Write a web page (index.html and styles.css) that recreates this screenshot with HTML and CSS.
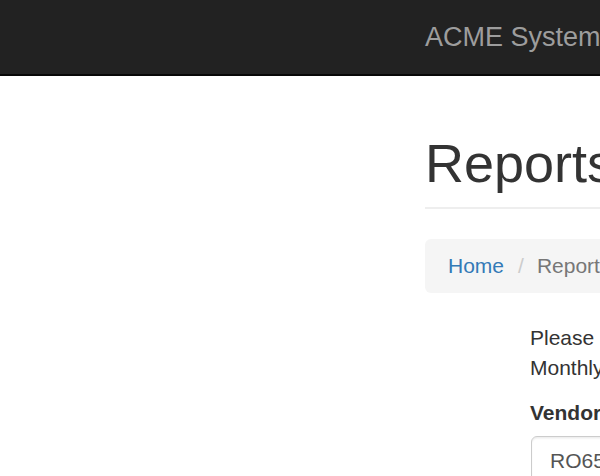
FILE: index.html
```html
<!DOCTYPE html>
<html>
<head>
<meta charset="utf-8">
<link rel="stylesheet" href="styles.css">
</head>
<body>
<nav class="navbar">
  <div class="container">
    <span class="brand">ACME System</span>
  </div>
</nav>
<main class="container">
  <div class="page-header">
    <h1>Reports</h1>
  </div>
  <ol class="breadcrumb">
    <li><a href="#">Home</a></li>
    <li class="sep">/</li>
    <li class="active">Reports</li>
  </ol>
  <div class="form-col">
    <p class="intro">Please select a vendor below to view the<br>Monthly Vendor Report.</p>
    <label class="label">Vendor</label>
    <div class="input">RO6521</div>
  </div>
</main>
</body>
</html>
```
FILE: styles.css
```css
html, body {
  margin: 0;
  padding: 0;
  overflow: hidden;
  background: #fff;
}
body {
  font-family: "Liberation Sans", Arial, sans-serif;
  font-size: 21px;
  line-height: 30px;
  color: #333;
  width: 600px;
  height: 476px;
}
.container {
  margin-left: 425px;
  width: 1200px;
}
.navbar {
  height: 74px;
  background: #222;
  border-bottom: 2px solid #080808;
}
.brand {
  display: block;
  padding-top: 22px;
  font-size: 27px;
  line-height: 30px;
  color: #9d9d9d;
  white-space: nowrap;
}
.page-header {
  margin-top: 58px;
  border-bottom: 2px solid #eee;
  padding-bottom: 3px;
}
.page-header h1 {
  margin: 0 0 11px;
  font-size: 54px;
  line-height: 59px;
  font-weight: 500;
  color: #333;
}
.breadcrumb {
  list-style: none;
  margin: 30px 0 30px;
  padding: 12px 23px;
  background: #f5f5f5;
  border-radius: 6px;
  display: flex;
  white-space: nowrap;
}
.breadcrumb a {
  color: #337ab7;
  text-decoration: none;
}
.breadcrumb .sep {
  color: #ccc;
  padding: 0 13px 0 14px;
}
.breadcrumb .active {
  color: #777;
}
.form-col {
  padding-left: 105px;
}
.intro {
  margin: 0 0 15px;
  white-space: nowrap;
}
.label {
  display: block;
  font-weight: bold;
  margin-bottom: 8px;
}
.input {
  margin-left: 1px;
  width: 400px;
  box-sizing: border-box;
  height: 51px;
  padding: 9px 18px;
  border: 1.5px solid #ccc;
  border-radius: 6px;
  box-shadow: inset 0 1.5px 1.5px rgba(0,0,0,0.075);
  color: #555;
}
```
